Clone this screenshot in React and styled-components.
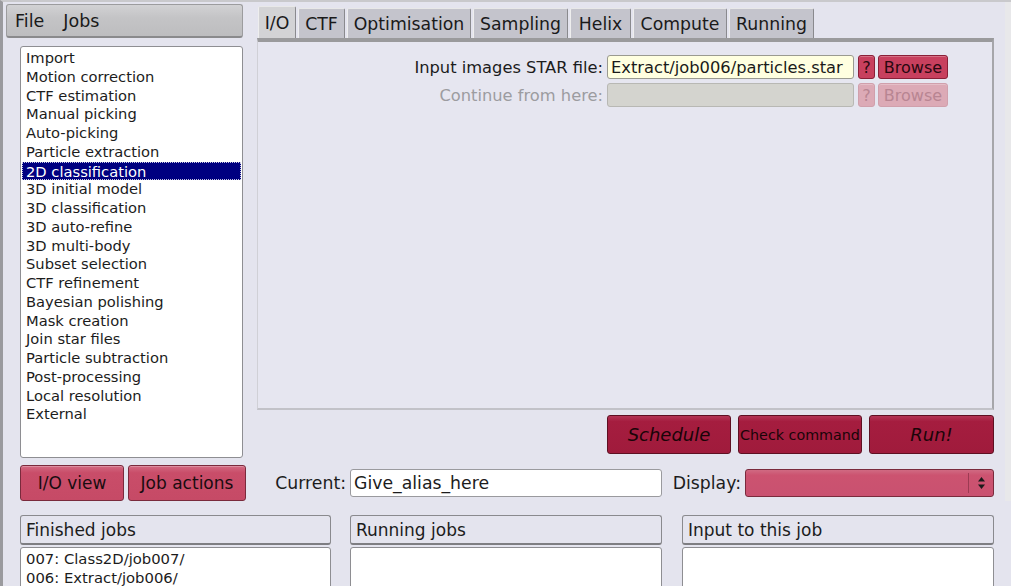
import React from "react";
import styled, { createGlobalStyle } from "styled-components";

const GlobalStyle = createGlobalStyle`
  html, body {
    margin: 0;
    padding: 0;
    background: #e4e4ee;
  }
  * {
    box-sizing: border-box;
  }
`;

const jobTypes = [
  "Import",
  "Motion correction",
  "CTF estimation",
  "Manual picking",
  "Auto-picking",
  "Particle extraction",
  "2D classification",
  "3D initial model",
  "3D classification",
  "3D auto-refine",
  "3D multi-body",
  "Subset selection",
  "CTF refinement",
  "Bayesian polishing",
  "Mask creation",
  "Join star files",
  "Particle subtraction",
  "Post-processing",
  "Local resolution",
  "External",
];

const tabs = [
  { label: "I/O", width: 38 },
  { label: "CTF", width: 47 },
  { label: "Optimisation", width: 124 },
  { label: "Sampling", width: 95 },
  { label: "Helix", width: 61 },
  { label: "Compute", width: 94 },
  { label: "Running", width: 85 },
];

const App = () => {
  return (
    <>
      <GlobalStyle />
      <Window>
        <Top>
          <LeftColumn>
            <MenuBar>
              <MenuItem>File</MenuItem>
              <MenuItem>Jobs</MenuItem>
            </MenuBar>
            <JobList>
              {jobTypes.map((job) => (
                <JobItem key={job} selected={job === "2D classification"}>
                  {job}
                </JobItem>
              ))}
            </JobList>
            <ViewButtons>
              <PinkButton width={104}>I/O view</PinkButton>
              <PinkButton width={118}>Job actions</PinkButton>
            </ViewButtons>
          </LeftColumn>

          <RightColumn>
            <TabBar>
              {tabs.map((tab) => (
                <Tab key={tab.label} width={tab.width} active={tab.label === "I/O"}>
                  {tab.label}
                </Tab>
              ))}
            </TabBar>
            <TabPanel>
              <FieldRow>
                <FieldLabel>Input images STAR file:</FieldLabel>
                <FileInput>Extract/job006/particles.star</FileInput>
                <HelpButton>?</HelpButton>
                <BrowseButton>Browse</BrowseButton>
              </FieldRow>
              <FieldRow>
                <FieldLabel disabled>Continue from here:</FieldLabel>
                <FileInput disabled />
                <HelpButton disabled>?</HelpButton>
                <BrowseButton disabled>Browse</BrowseButton>
              </FieldRow>
            </TabPanel>
            <ActionRow>
              <RunButton italic width={124}>
                Schedule
              </RunButton>
              <RunButton small width={124}>
                Check command
              </RunButton>
              <RunButton italic width={125}>
                Run!
              </RunButton>
            </ActionRow>
            <AliasRow>
              <RowLabel width={93}>Current:</RowLabel>
              <AliasInput>Give_alias_here</AliasInput>
              <RowLabel width={83}>Display:</RowLabel>
              <DisplaySelect>
                <SelectArrows>
                  <svg width="9" height="14" viewBox="0 0 9 14">
                    <path d="M4.5 1 L8 5.5 L1 5.5 Z" fill="#1a1a1a" />
                    <path d="M4.5 13 L8 8.5 L1 8.5 Z" fill="#1a1a1a" />
                  </svg>
                </SelectArrows>
              </DisplaySelect>
            </AliasRow>
          </RightColumn>
          <EdgeStrip />
        </Top>

        <Bottom>
          <JobColumn width={311}>
            <ColumnHeader>Finished jobs</ColumnHeader>
            <ColumnList>
              <ColumnItem>007: Class2D/job007/</ColumnItem>
              <ColumnItem>006: Extract/job006/</ColumnItem>
            </ColumnList>
          </JobColumn>
          <JobColumn width={312}>
            <ColumnHeader>Running jobs</ColumnHeader>
            <ColumnList />
          </JobColumn>
          <JobColumn width={312}>
            <ColumnHeader>Input to this job</ColumnHeader>
            <ColumnList />
          </JobColumn>
        </Bottom>
      </Window>
    </>
  );
};

const Window = styled.div`
  width: 1011px;
  height: 586px;
  overflow: hidden;
  background: #e4e4ee;
  border-top: 2px solid #c9c9cc;
  border-left: 3px solid #9a9a9e;
  font-family: "DejaVu Sans", "Liberation Sans", sans-serif;
  color: #1c1c1c;
  display: flex;
  flex-direction: column;
`;

const Top = styled.div`
  display: flex;
  align-items: flex-start;
`;

const LeftColumn = styled.div`
  width: 240px;
  margin-left: 3px;
  display: flex;
  flex-direction: column;
`;

const MenuBar = styled.div`
  margin-top: 2px;
  width: 237px;
  height: 34px;
  display: flex;
  align-items: center;
  gap: 19px;
  padding-left: 8px;
  background: linear-gradient(#d2d2d4, #c4c4c6 40%, #bdbdbf);
  border: 1px solid #9c9c9e;
  border-bottom: 2px solid #8a8a8c;
  border-radius: 3px;
  font-size: 17.5px;
`;

const MenuItem = styled.span`
  color: #1a1a1a;
`;

const JobList = styled.div`
  margin-top: 8px;
  margin-left: 14px;
  width: 223px;
  height: 412px;
  background: #ffffff;
  border: 1px solid #8e8e92;
  border-radius: 3px;
  padding: 2px 1px;
`;

const JobItem = styled.div`
  height: 18.75px;
  line-height: 18.75px;
  font-size: 14.7px;
  padding-left: ${(p) => (p.selected ? "3px" : "4px")};
  color: ${(p) => (p.selected ? "#ffffff" : "#1c1c1c")};
  background: ${(p) => (p.selected ? "#000080" : "transparent")};
  border: ${(p) => (p.selected ? "1px dotted #c8c8e0" : "none")};
  white-space: nowrap;
`;

const ViewButtons = styled.div`
  margin-top: 7px;
  margin-left: 14px;
  display: flex;
  gap: 4px;
`;

const PinkButton = styled.div`
  width: ${(p) => p.width}px;
  height: 36px;
  display: flex;
  align-items: center;
  justify-content: center;
  background: linear-gradient(#d36a82, #c94d69 20%, #c64a66);
  border: 1px solid #7a2a3c;
  border-radius: 3px;
  font-size: 17px;
  color: #1a0c10;
  box-shadow: inset 0 1px 0 rgba(255, 255, 255, 0.25);
`;

const RightColumn = styled.div`
  margin-left: 11px;
  width: 737px;
  display: flex;
  flex-direction: column;
`;

const TabBar = styled.div`
  margin-top: 4px;
  height: 32px;
  display: flex;
  align-items: flex-end;
  gap: 2px;
  padding-left: 1px;
`;

const Tab = styled.div`
  width: ${(p) => p.width}px;
  height: ${(p) => (p.active ? "32px" : "30px")};
  display: flex;
  align-items: center;
  justify-content: center;
  font-size: 17.3px;
  white-space: nowrap;
  color: #1a1a1a;
  background: ${(p) => (p.active ? "#d3d3d5" : "#c4c4cc")};
  border-left: 1px solid #eeeeee;
  border-top: 1px solid #e8e8e8;
  border-right: 1px solid #8a8a8e;
  border-radius: 2px 2px 0 0;
`;

const TabPanel = styled.div`
  height: 372px;
  background: #e6e6f0;
  border-top: 4px solid #9a9a9c;
  border-right: 2px solid #a6a6aa;
  border-bottom: 2px solid #c2c2c8;
  border-left: 1px solid #d0d0d6;
  padding-top: 13px;
  display: flex;
  flex-direction: column;
  gap: 4px;
`;

const FieldRow = styled.div`
  display: flex;
  align-items: center;
  height: 24px;
`;

const FieldLabel = styled.div`
  width: 349px;
  padding-right: 4px;
  text-align: right;
  font-size: 16.3px;
  white-space: nowrap;
  color: ${(p) => (p.disabled ? "#9c9ca0" : "#1c1c1c")};
`;

const FileInput = styled.div`
  width: 247px;
  height: 24px;
  display: flex;
  align-items: center;
  padding-left: 3px;
  font-size: 16.3px;
  white-space: nowrap;
  background: ${(p) => (p.disabled ? "#d4d4cf" : "#ffffe0")};
  border: 1px solid ${(p) => (p.disabled ? "#b8b8b4" : "#9a9a90")};
  border-radius: 3px;
  color: #1a1a1a;
`;

const RedSmallButton = styled.div`
  height: 24px;
  display: flex;
  align-items: center;
  justify-content: center;
  border-radius: 3px;
  font-size: 16px;
  background: ${(p) => (p.disabled ? "#dcaab6" : "#c8405e")};
  border: 1px solid ${(p) => (p.disabled ? "#d0a0ac" : "#8a2038")};
  color: ${(p) => (p.disabled ? "#b88592" : "#2a0810")};
  box-shadow: inset 0 1px 0 rgba(255, 255, 255, 0.25);
`;

const HelpButton = styled(RedSmallButton)`
  width: 17px;
  margin-left: 4px;
`;

const BrowseButton = styled(RedSmallButton)`
  width: 70px;
  margin-left: 3px;
`;

const ActionRow = styled.div`
  margin-top: 5px;
  height: 39px;
  display: flex;
  justify-content: flex-end;
  gap: 7px;
`;

const RunButton = styled.div`
  width: ${(p) => p.width}px;
  height: 39px;
  display: flex;
  align-items: center;
  justify-content: center;
  background: linear-gradient(#b43556, #a51d3f 15%, #a01b3c);
  border: 1px solid #5e1022;
  border-radius: 3px;
  color: #1a0408;
  font-size: ${(p) => (p.small ? "14.3px" : "18px")};
  font-style: ${(p) => (p.italic ? "italic" : "normal")};
  white-space: nowrap;
`;

const AliasRow = styled.div`
  margin-top: 15px;
  height: 28px;
  display: flex;
  align-items: center;
`;

const RowLabel = styled.div`
  width: ${(p) => p.width}px;
  padding-right: 4px;
  text-align: right;
  font-size: 17.3px;
  white-space: nowrap;
  color: #1c1c1c;
`;

const AliasInput = styled.div`
  width: 312px;
  height: 28px;
  display: flex;
  align-items: center;
  padding-left: 3px;
  background: #ffffff;
  border: 1px solid #9a9a9e;
  border-radius: 3px;
  font-size: 17.3px;
`;

const DisplaySelect = styled.div`
  width: 249px;
  height: 28px;
  display: flex;
  justify-content: flex-end;
  background: linear-gradient(#d06a82, #cc5370 20%, #c95170);
  border: 1px solid #7a2a3c;
  border-radius: 3px;
`;

const SelectArrows = styled.div`
  width: 25px;
  display: flex;
  align-items: center;
  justify-content: center;
  border-left: 1px solid #9c3a52;
  margin: 3px 0;
`;

const EdgeStrip = styled.div`
  margin-left: auto;
  width: 6px;
  align-self: stretch;
  background: #e8e8ea;
`;

const Bottom = styled.div`
  margin-top: 14px;
  margin-left: 17px;
  display: flex;
  gap: 19px;
  & > :last-child {
    margin-left: 1px;
  }
`;

const JobColumn = styled.div`
  width: ${(p) => p.width}px;
  display: flex;
  flex-direction: column;
  gap: 2px;
`;

const ColumnHeader = styled.div`
  height: 30px;
  display: flex;
  align-items: center;
  padding-left: 5px;
  font-size: 17px;
  background: #e4e4ee;
  border: 1px solid #8a8a8e;
  border-bottom: 2px solid #7e7e82;
  border-radius: 3px;
`;

const ColumnList = styled.div`
  height: 60px;
  background: #ffffff;
  border: 1px solid #8e8e92;
  border-radius: 3px;
  padding: 1px 5px;
`;

const ColumnItem = styled.div`
  height: 19px;
  line-height: 19px;
  font-size: 14.8px;
  white-space: nowrap;
`;

export default App;
